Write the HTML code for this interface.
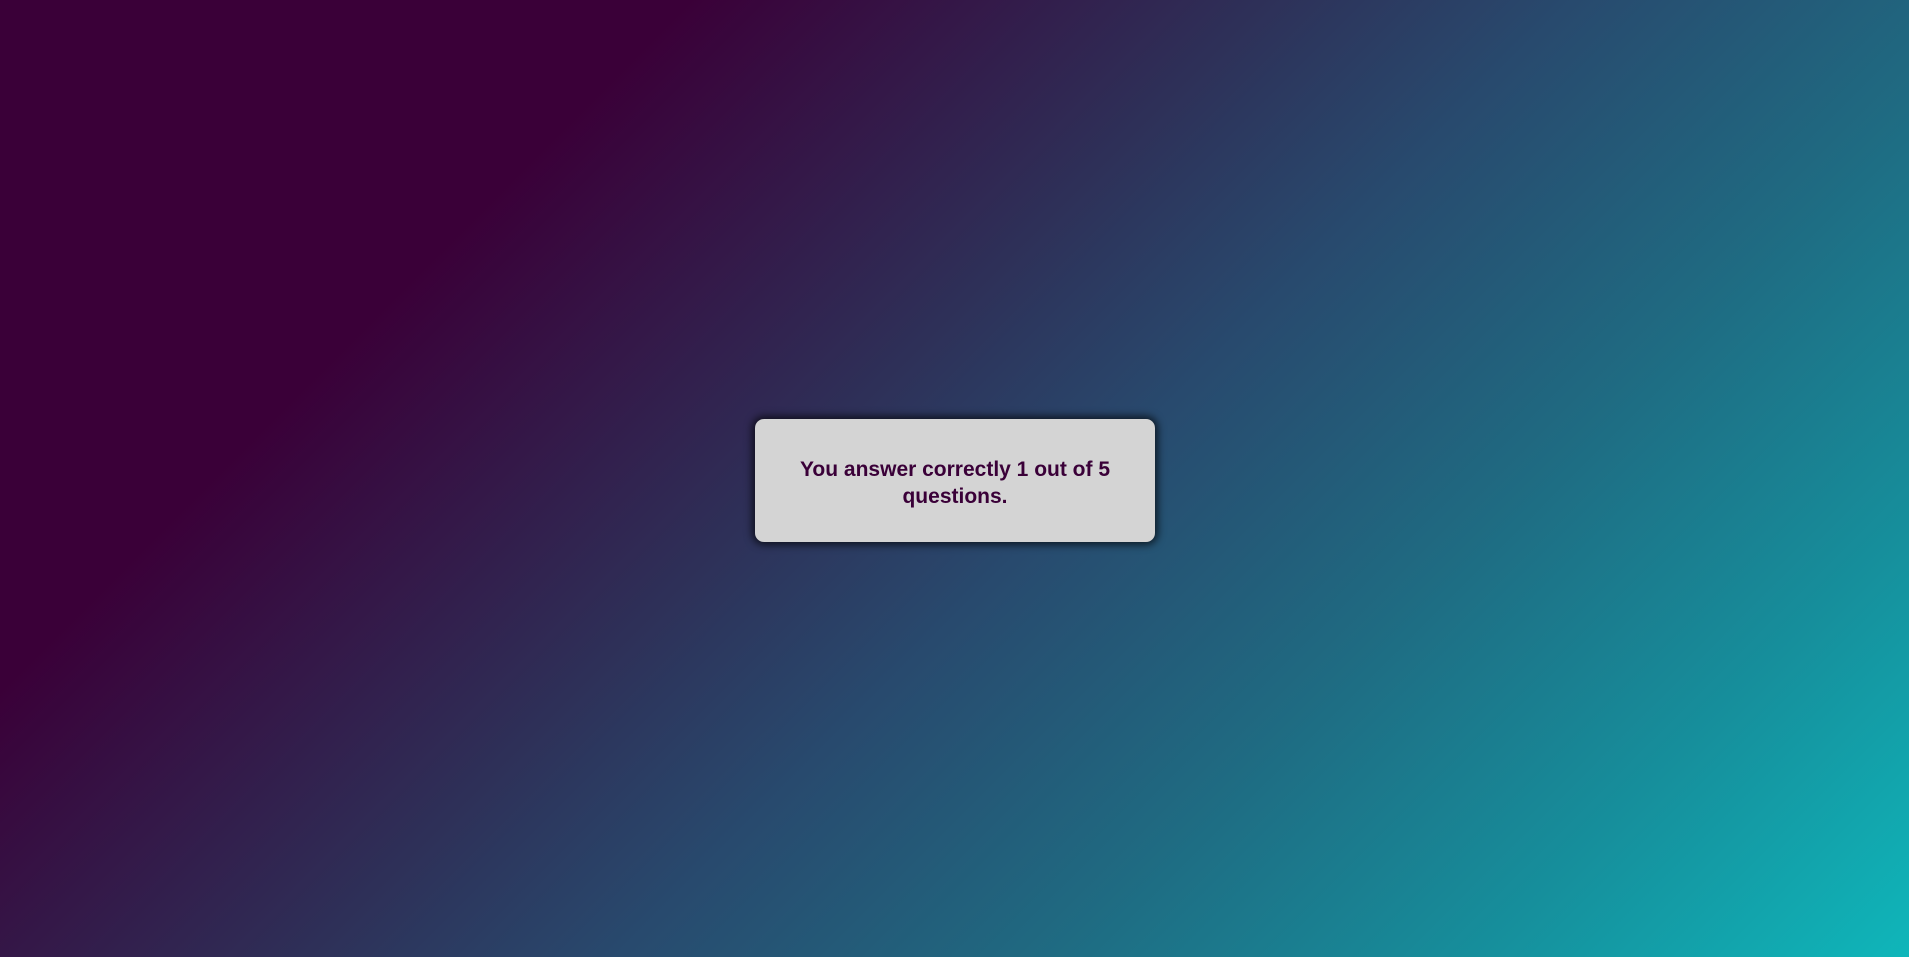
<!DOCTYPE html>
<html><head><style>
html,body{margin:0;height:100%;}
body{width:1909px;height:957px;background:linear-gradient(135deg,#3a0038 0%,#3a0038 24%,#341848 34%,#2e3058 44%,#284a6e 55%,#1f6b82 70%,#168f9c 85%,#0fb6ba 100%);position:relative;overflow:hidden;font-family:"Liberation Sans",sans-serif;}
.box{position:absolute;left:755px;top:419px;width:400px;height:123px;background:#d4d4d4;border-radius:9px;box-shadow:0 0 8px 3px rgba(0,0,0,0.65);display:flex;align-items:center;justify-content:center;text-align:center;box-sizing:border-box;padding:4px 38px 0;}
.box p{margin:0;color:#3a0038;font-weight:bold;font-size:21px;line-height:27px;}
</style></head><body>
<div class="box"><p>You answer correctly 1 out of 5 questions.</p></div>
</body></html>
